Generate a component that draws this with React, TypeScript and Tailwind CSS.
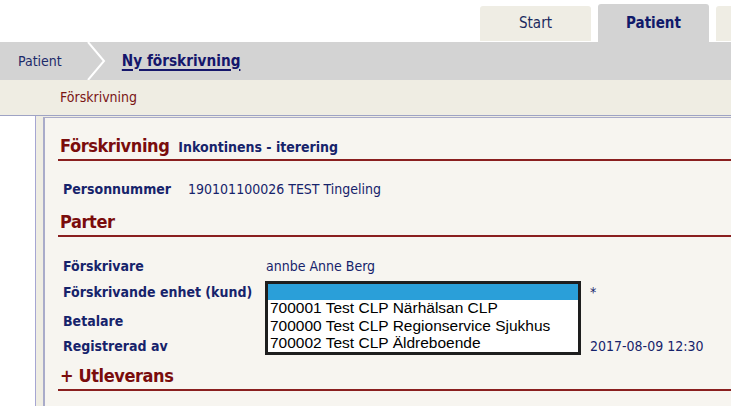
import React from "react";

// ─── Data ───────────────────────────────────────────────────────────────────────

const OPTIONS = [
  "700001 Test CLP Närhälsan CLP",
  "700000 Test CLP Regionservice Sjukhus",
  "700002 Test CLP Äldreboende",
];

const FONT = "font-['DejaVu_Sans_Condensed','DejaVu_Sans',sans-serif]";

// ─── Pieces ─────────────────────────────────────────────────────────────────────

function SectionHeading({ children }: { children: React.ReactNode }) {
  return (
    <div className="ml-[13px] border-b-2 border-[#8a1f1f] pl-[2px] pb-0 flex items-baseline gap-[9px]">
      {children}
    </div>
  );
}

function Row({
  label,
  children,
  className = "",
}: {
  label: string;
  children?: React.ReactNode;
  className?: string;
}) {
  return (
    <div className={`flex items-center ${className}`}>
      <div className="w-[203px] shrink-0 font-bold text-[14px] text-[#16236b]">
        {label}
      </div>
      {children}
    </div>
  );
}

// ─── Component ──────────────────────────────────────────────────────────────────

export default function App() {
  return (
    <div
      className={`w-[731px] h-[406px] overflow-hidden bg-white flex flex-col ${FONT}`}
    >
      {/* Tabs */}
      <div className="h-[42px] shrink-0 flex items-end gap-[7px] pl-[480px]">
        <div className="w-[111px] shrink-0 h-[35px] mb-[1px] rounded-t-[3px] bg-[#efede4] flex items-center justify-center text-[15px] text-[#1c2a5e]">
          Start
        </div>
        <div className="w-[111px] shrink-0 h-[38px] rounded-t-[3px] bg-[#d3d3d3] flex items-center justify-center text-[15px] font-bold text-[#101a6a]">
          Patient
        </div>
        <div className="w-[40px] shrink-0 h-[35px] mb-[1px] rounded-tl-[3px] bg-[#efede4]" />
      </div>

      {/* Breadcrumb */}
      <div className="h-[38px] shrink-0 bg-[#d3d3d3] flex items-center">
        <span className="pl-[18px] text-[14px] text-[#1c2a6a]">Patient</span>
        <svg width="22" height="38" viewBox="0 0 22 38" className="ml-[25px]">
          <polyline
            points="1,0 17,19 1,38"
            fill="none"
            stroke="#ffffff"
            strokeWidth="2"
          />
        </svg>
        <a className="ml-[13px] text-[15.2px] font-bold text-[#15166b] underline underline-offset-[3px] decoration-[1.5px]">
          Ny förskrivning
        </a>
      </div>

      {/* Sub bar */}
      <div className="h-[36px] shrink-0 bg-[#efede3] flex items-center border-b border-[#9ea3c4]">
        <span className="pl-[60px] text-[14px] text-[#7a1515]">Förskrivning</span>
      </div>

      {/* Content */}
      <div className="flex-1 flex bg-[#efede3]">
        <div className="w-[36px] shrink-0 bg-white border-r border-[#a6a6d2]" />
        <div className="flex-1 ml-[7px] mt-[1px] bg-[#f7f5f0] border-l-2 border-t border-[#a9abc9] pt-[14px]">
          <SectionHeading>
            <span className="text-[18px] font-bold tracking-[-0.4px] text-[#7a0c0c]">Förskrivning</span>
            <span className="text-[14px] font-bold text-[#16236b]">Inkontinens - iterering</span>
          </SectionHeading>

          <div className="mt-[18px] ml-[18px] flex items-center text-[14px] text-[#16236b]">
            <span className="font-bold">Personnummer</span>
            <span className="ml-[17px]">190101100026 TEST Tingeling</span>
          </div>

          <div className="mt-[8px]">
            <SectionHeading>
              <span className="text-[18px] font-bold tracking-[-0.4px] text-[#7a0c0c]">Parter</span>
            </SectionHeading>
          </div>

          <div className="ml-[18px] mt-[19px] relative">
            <Row label="Förskrivare" className="h-[20px]">
              <span className="text-[14px] text-[#16236b]">annbe Anne Berg</span>
            </Row>
            <Row label="Förskrivande enhet (kund)" className="h-[32px]">
              <span className="ml-[324px] text-[14px] text-[#16236b]">*</span>
            </Row>
            <Row label="Betalare" className="h-[26px]" />
            <Row label="Registrerad av" className="h-[24px]">
              <span className="ml-[324px] text-[14px] text-[#16236b]">2017-08-09 12:30</span>
            </Row>

            {/* Open select list */}
            <div className="absolute left-[202px] top-[25px] w-[316px] border-[3px] border-[#1e1e1e] bg-white font-['Liberation_Sans',Arial,sans-serif] text-[15.5px] leading-[17.5px] text-black">
              <div className="h-[16px] bg-[#2a9fd9]" />
              <div className="pl-[2px] -mt-[1px]">
                {OPTIONS.map(o => (
                  <div key={o}>{o}</div>
                ))}
              </div>
            </div>
          </div>

          <div className="mt-[4px]">
            <SectionHeading>
              <span className="text-[18px] font-bold tracking-[-0.4px] text-[#7a0c0c]">+ Utleverans</span>
            </SectionHeading>
          </div>
        </div>
      </div>
    </div>
  );
}
